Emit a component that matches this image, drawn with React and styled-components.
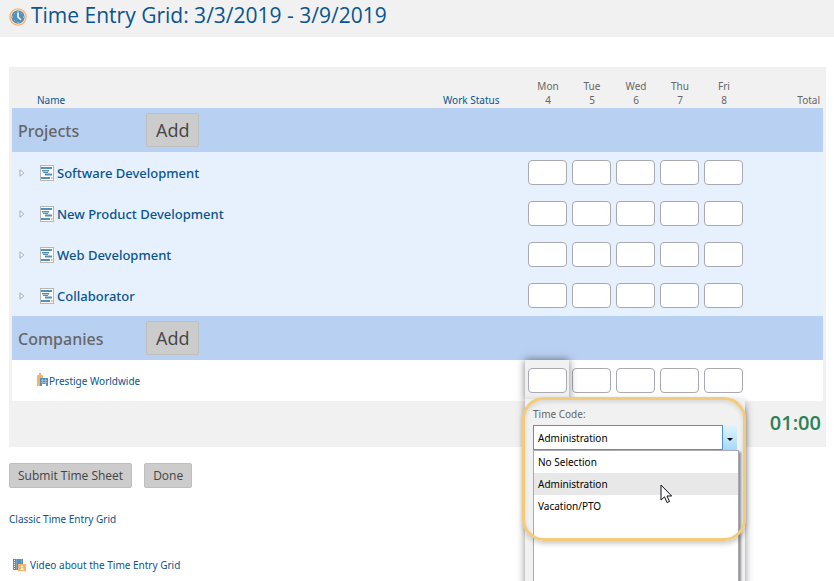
import React, { useState } from 'react';
import styled, { createGlobalStyle } from 'styled-components';

const GlobalStyle = createGlobalStyle`
* {
box-sizing: border-box;
}
body {
margin: 0;
background: #ffffff;
color: #666666;
font-family: "Noto Sans", "Open Sans", sans-serif;
font-size: 10px;
line-height: 14px;
}
`

const Page = styled.div`
position: relative;
min-height: 100vh;
overflow: hidden;
`

const Header = styled.header`
display: flex;
align-items: center;
gap: 4px;
height: 37px;
padding: 0 9px 4px;
background: #f1f1f1;
`

const Title = styled.h1`
margin: 0;
padding-bottom: 4px;
color: #0a5492;
font-family: "Open Sans", sans-serif;
font-size: 21px;
font-weight: 400;
line-height: 30px;
white-space: nowrap;
`

const Main = styled.main`
padding: 30px 8px 8px 9px;
`

const Panel = styled.div`
padding: 0 3px;
background: #f1f1f1;
`

const Grid = styled.table`
width: 100%;
table-layout: fixed;
border-collapse: collapse;
`

const Col = styled.col`
width: ${props => props.$width};
`

const HeadCell = styled.th`
height: 41px;
padding: 0 ${props => props.$right || '0'} 1px ${props => props.$left || '0'};
color: ${props => props.$link ? '#0a5492' : '#666666'};
font-weight: 400;
text-align: ${props => props.$align || 'left'};
vertical-align: bottom;
`

const GroupRow = styled.tr`
height: 44px;
background: #b8d0f2;
`

const GroupCell = styled.td`
padding: 0 0 0 6px;
`

const GroupInner = styled.div`
display: flex;
align-items: center;
`

const GroupName = styled.h2`
width: 128px;
margin: 0;
padding-top: 2px;
font-size: 16px;
font-weight: 500;
line-height: 22px;
`

const Button = styled.button`
height: ${props => props.$large ? '34px' : '25px'};
padding: 0 ${props => props.$large ? '9px' : '8px'};
border: 1px solid #bfbfbf;
border-radius: 2px;
background: #cccccc;
color: #444444;
font-family: "Open Sans", sans-serif;
font-size: ${props => props.$large ? '18px' : '12px'};
`

const ItemRow = styled.tr`
height: 41px;
background: ${props => props.$plain ? '#ffffff' : '#e7f1fe'};
`

const ItemCell = styled.td`
padding: ${props => props.$plain ? '0 0 0 25px' : '0 0 0 7px'};
`

const ItemInner = styled.div`
display: flex;
align-items: center;
`

const Expand = styled.button`
display: flex;
width: 21px;
padding: 0;
border: 0;
background: none;
`

const ItemLink = styled.a`
display: flex;
align-items: center;
gap: ${props => props.$small ? '0' : '3px'};
color: #0a5492;
font-size: ${props => props.$small ? '10px' : '13px'};
font-weight: ${props => props.$small ? '400' : '500'};
line-height: 18px;
text-decoration: none;
`

const DayCell = styled.td`
position: relative;
padding: 0 2px 0 3px;
`

const HourInput = styled.input`
position: relative;
z-index: ${props => props.$raised ? 3 : 0};
display: block;
width: 100%;
height: 25px;
padding: 0 4px;
border: 1px solid #a9a9b1;
border-radius: 4px;
background: #ffffff;
font-family: inherit;
font-size: 10px;
`

const OpenTab = styled.div`
position: absolute;
z-index: 1;
inset: 0;
background: #f1f1f1;
box-shadow: 0 0 8px rgba(0, 0, 0, 0.5);
`

const Popover = styled.div`
position: absolute;
z-index: 2;
top: 39px;
left: 0;
width: 220px;
height: 240px;
padding: 8px 6px 0 8px;
background: #f1f1f1;
box-shadow: 0 4px 8px rgba(0, 0, 0, 0.45);
`

const CodeLabel = styled.label`
display: block;
height: 18px;
`

const Combo = styled.div`
display: flex;
width: 204px;
`

const CodeSelect = styled.select`
flex: 1;
height: 25px;
padding: 0 4px;
border: 1px solid #4d90e8;
border-radius: 0;
outline: 0;
background: #ffffff;
color: #000000;
appearance: none;
font-family: inherit;
font-size: 10px;
`

const ComboArrow = styled.button`
display: flex;
align-items: center;
justify-content: center;
width: 14px;
padding: 4px 0 0;
border: 0;
background: linear-gradient(#e2f4fd, #a5daf7);
`

const CodeList = styled.ul`
height: 180px;
margin: 0;
padding: 0;
border: 1px solid #a9a9b5;
background: #ffffff;
box-shadow: 2px 2px 2px rgba(0, 0, 0, 0.4);
list-style: none;
`

const CodeItem = styled.li`
padding: 0 4px;
background: ${props => props.$active ? '#e8e8e8' : '#ffffff'};
color: #000000;
line-height: 22px;
`

const Callout = styled.div`
position: absolute;
z-index: 4;
top: -2px;
left: -3px;
width: 224px;
height: 144px;
border: 3px solid #f3cb7b;
border-radius: 22px;
box-shadow: 1px 3px 5px rgba(0, 0, 0, 0.2), inset 0 2px 4px rgba(0, 0, 0, 0.12);
pointer-events: none;
`

const Pointer = styled.svg`
position: absolute;
z-index: 5;
top: 85px;
left: 135px;
`

const TotalCell = styled.td`
height: 46px;
padding: 0 2px 2px 0;
color: #2e8057;
font-family: "Open Sans", sans-serif;
font-size: 20px;
font-weight: 600;
line-height: 26px;
text-align: right;
`

const Actions = styled.div`
display: flex;
gap: 12px;
margin-top: 16px;
`

const FooterLinks = styled.div`
display: flex;
flex-direction: column;
align-items: flex-start;
gap: 32px;
margin-top: 24px;
`

const FooterLink = styled.a`
display: flex;
align-items: center;
gap: 4px;
padding-left: ${props => props.$indent ? '4px' : '0'};
color: #0a5492;
text-decoration: none;
`

const days = [['Mon', 4], ['Tue', 5], ['Wed', 6], ['Thu', 7], ['Fri', 8]]
const projects = ['Software Development', 'New Product Development', 'Web Development', 'Collaborator']
const timeCodes = ['No Selection', 'Administration', 'Vacation/PTO']

const ClockIcon = () => (
    <svg width="18" height="18" viewBox="0 0 18 18" aria-hidden="true">
        <circle cx="9" cy="9" r="8.1" fill="#fff4e6" stroke="#fbb56c" strokeWidth="1.4" />
        <circle cx="9" cy="9" r="6.7" fill="#5590b8" />
        <path d="M9 3v1M9 14v1M3 9h1M14 9h1M5 5l.5.5M13 5l-.5.5M5 13l.5-.5" stroke="#c5dbe9" />
        <path d="M9 4.5V9l3 3" fill="none" stroke="#ffffff" strokeWidth="1.5" />
    </svg>
)

const ProjectIcon = () => (
    <svg width="14" height="16" viewBox="0 0 14 16" aria-hidden="true">
        <rect x=".5" y=".5" width="13" height="15" fill="#ffffff" stroke="#b3b7ba" />
        <path d="M1 2h11v2H1zM2 5h7v1.6H2zM3 7h5v1H3zM5 8.6h7v1.8H5zM1 12h9v2H1z" fill="#5590b8" />
        <path d="M11 12h1.6v2H11z" fill="#fbb56c" />
    </svg>
)

const CompanyIcon = () => (
    <svg width="12" height="16" viewBox="0 0 12 16" aria-hidden="true">
        <path d="M0 13V3l1-1h1V0h2v2h1l1 1v2H3v8z" fill="#fdb062" />
        <path d="M3 5h8v8H9v-2H5v2H3z" fill="#5590b8" />
        <path d="M4 7.5h6M4 9.5h6M5.5 6v5M8.5 6v5" stroke="#b6d0e1" strokeWidth=".6" />
    </svg>
)

const VideoIcon = () => (
    <svg width="13" height="12" viewBox="0 0 13 12" aria-hidden="true">
        <path d="M0 0h10v5H6v6H0z" fill="#5590b8" />
        <path d="M1.5 1v10" stroke="#ffffff" strokeDasharray="1 1" />
        <path d="M3.5 0v11M8.5 0v5" stroke="#8fb6d0" strokeWidth=".6" />
        <path d="M5 5h8v7H5z" fill="#fdb062" />
        <circle cx="9" cy="7.5" r="1.1" fill="#ffffff" />
        <path d="M7 11c0-2.5 4-2.5 4 0z" fill="#ffffff" />
    </svg>
)

const TimeCodePopover = () => {
    const [code, setCode] = useState('Administration')

    return (
        <Popover>
            <CodeLabel htmlFor="time-code">Time Code:</CodeLabel>
            <Combo>
                <CodeSelect id="time-code" value={code} onChange={e => setCode(e.target.value)}>
                    {timeCodes.map(name => <option key={name}>{name}</option>)}
                </CodeSelect>
                <ComboArrow type="button" aria-label="Open list">
                    <svg width="6" height="3" viewBox="0 0 6 3"><path d="M0 0h6L3 3z" fill="#000000" /></svg>
                </ComboArrow>
            </Combo>
            <CodeList>
                {timeCodes.map(name => (
                    <CodeItem key={name} $active={name === code} onClick={() => setCode(name)}>{name}</CodeItem>
                ))}
            </CodeList>
            <Callout />
            <Pointer width="13" height="20" viewBox="0 0 13 20">
                <path d="M1 1v15l3.5-3.2L7 18.5l2.5-1-2.5-5.5h4.7z" fill="#ffffff" stroke="#111122" />
            </Pointer>
        </Popover>
    )
}

const DayCells = ({ name, open }) => days.map(([day], i) => (
    <DayCell key={day}>
        {open && i === 0 && <OpenTab />}
        <HourInput $raised={open && i === 0} type="text" aria-label={`${name} ${day}`} />
        {open && i === 0 && <TimeCodePopover />}
    </DayCell>
))

const Group = ({ name }) => (
    <GroupRow>
        <GroupCell colSpan={8}>
            <GroupInner>
                <GroupName>{name}</GroupName>
                <Button $large type="button">Add</Button>
            </GroupInner>
        </GroupCell>
    </GroupRow>
)

export default function App() {
    return (
        <Page>
            <GlobalStyle />
            <Header>
                <ClockIcon />
                <Title>Time Entry Grid: 3/3/2019 - 3/9/2019</Title>
            </Header>

            <Main>
                <Panel>
                    <Grid>
                        <colgroup>
                            <Col $width="auto" />
                            <Col $width="85px" />
                            {days.map(([day]) => <Col key={day} $width="44px" />)}
                            <Col $width="78px" />
                        </colgroup>
                        <thead>
                            <tr>
                                <HeadCell $link $left="25px">Name</HeadCell>
                                <HeadCell $link $left="3px">Work Status</HeadCell>
                                {days.map(([day, date]) => (
                                    <HeadCell key={day} $align="center" $left="2px">{day}<br />{date}</HeadCell>
                                ))}
                                <HeadCell $align="right" $right="3px">Total</HeadCell>
                            </tr>
                        </thead>
                        <tbody>
                            <Group name="Projects" />
                            {projects.map(name => (
                                <ItemRow key={name}>
                                    <ItemCell>
                                        <ItemInner>
                                            <Expand type="button" aria-label={`Expand ${name}`}>
                                                <svg width="6" height="8" viewBox="0 0 6 8">
                                                    <path d="M1 .8v6.4L4.8 4z" fill="#ffffff" stroke="#a3a9b0" />
                                                </svg>
                                            </Expand>
                                            <ItemLink href="#"><ProjectIcon />{name}</ItemLink>
                                        </ItemInner>
                                    </ItemCell>
                                    <td />
                                    <DayCells name={name} />
                                    <td />
                                </ItemRow>
                            ))}
                            <Group name="Companies" />
                            <ItemRow $plain>
                                <ItemCell $plain>
                                    <ItemInner>
                                        <ItemLink $small href="#"><CompanyIcon />Prestige Worldwide</ItemLink>
                                    </ItemInner>
                                </ItemCell>
                                <td />
                                <DayCells name="Prestige Worldwide" open />
                                <td />
                            </ItemRow>
                        </tbody>
                        <tfoot>
                            <tr>
                                <TotalCell colSpan={8}>01:00</TotalCell>
                            </tr>
                        </tfoot>
                    </Grid>
                </Panel>

                <Actions>
                    <Button type="button">Submit Time Sheet</Button>
                    <Button type="button">Done</Button>
                </Actions>

                <FooterLinks>
                    <FooterLink href="#">Classic Time Entry Grid</FooterLink>
                    <FooterLink $indent href="#"><VideoIcon />Video about the Time Entry Grid</FooterLink>
                </FooterLinks>
            </Main>
        </Page>
    )
}
